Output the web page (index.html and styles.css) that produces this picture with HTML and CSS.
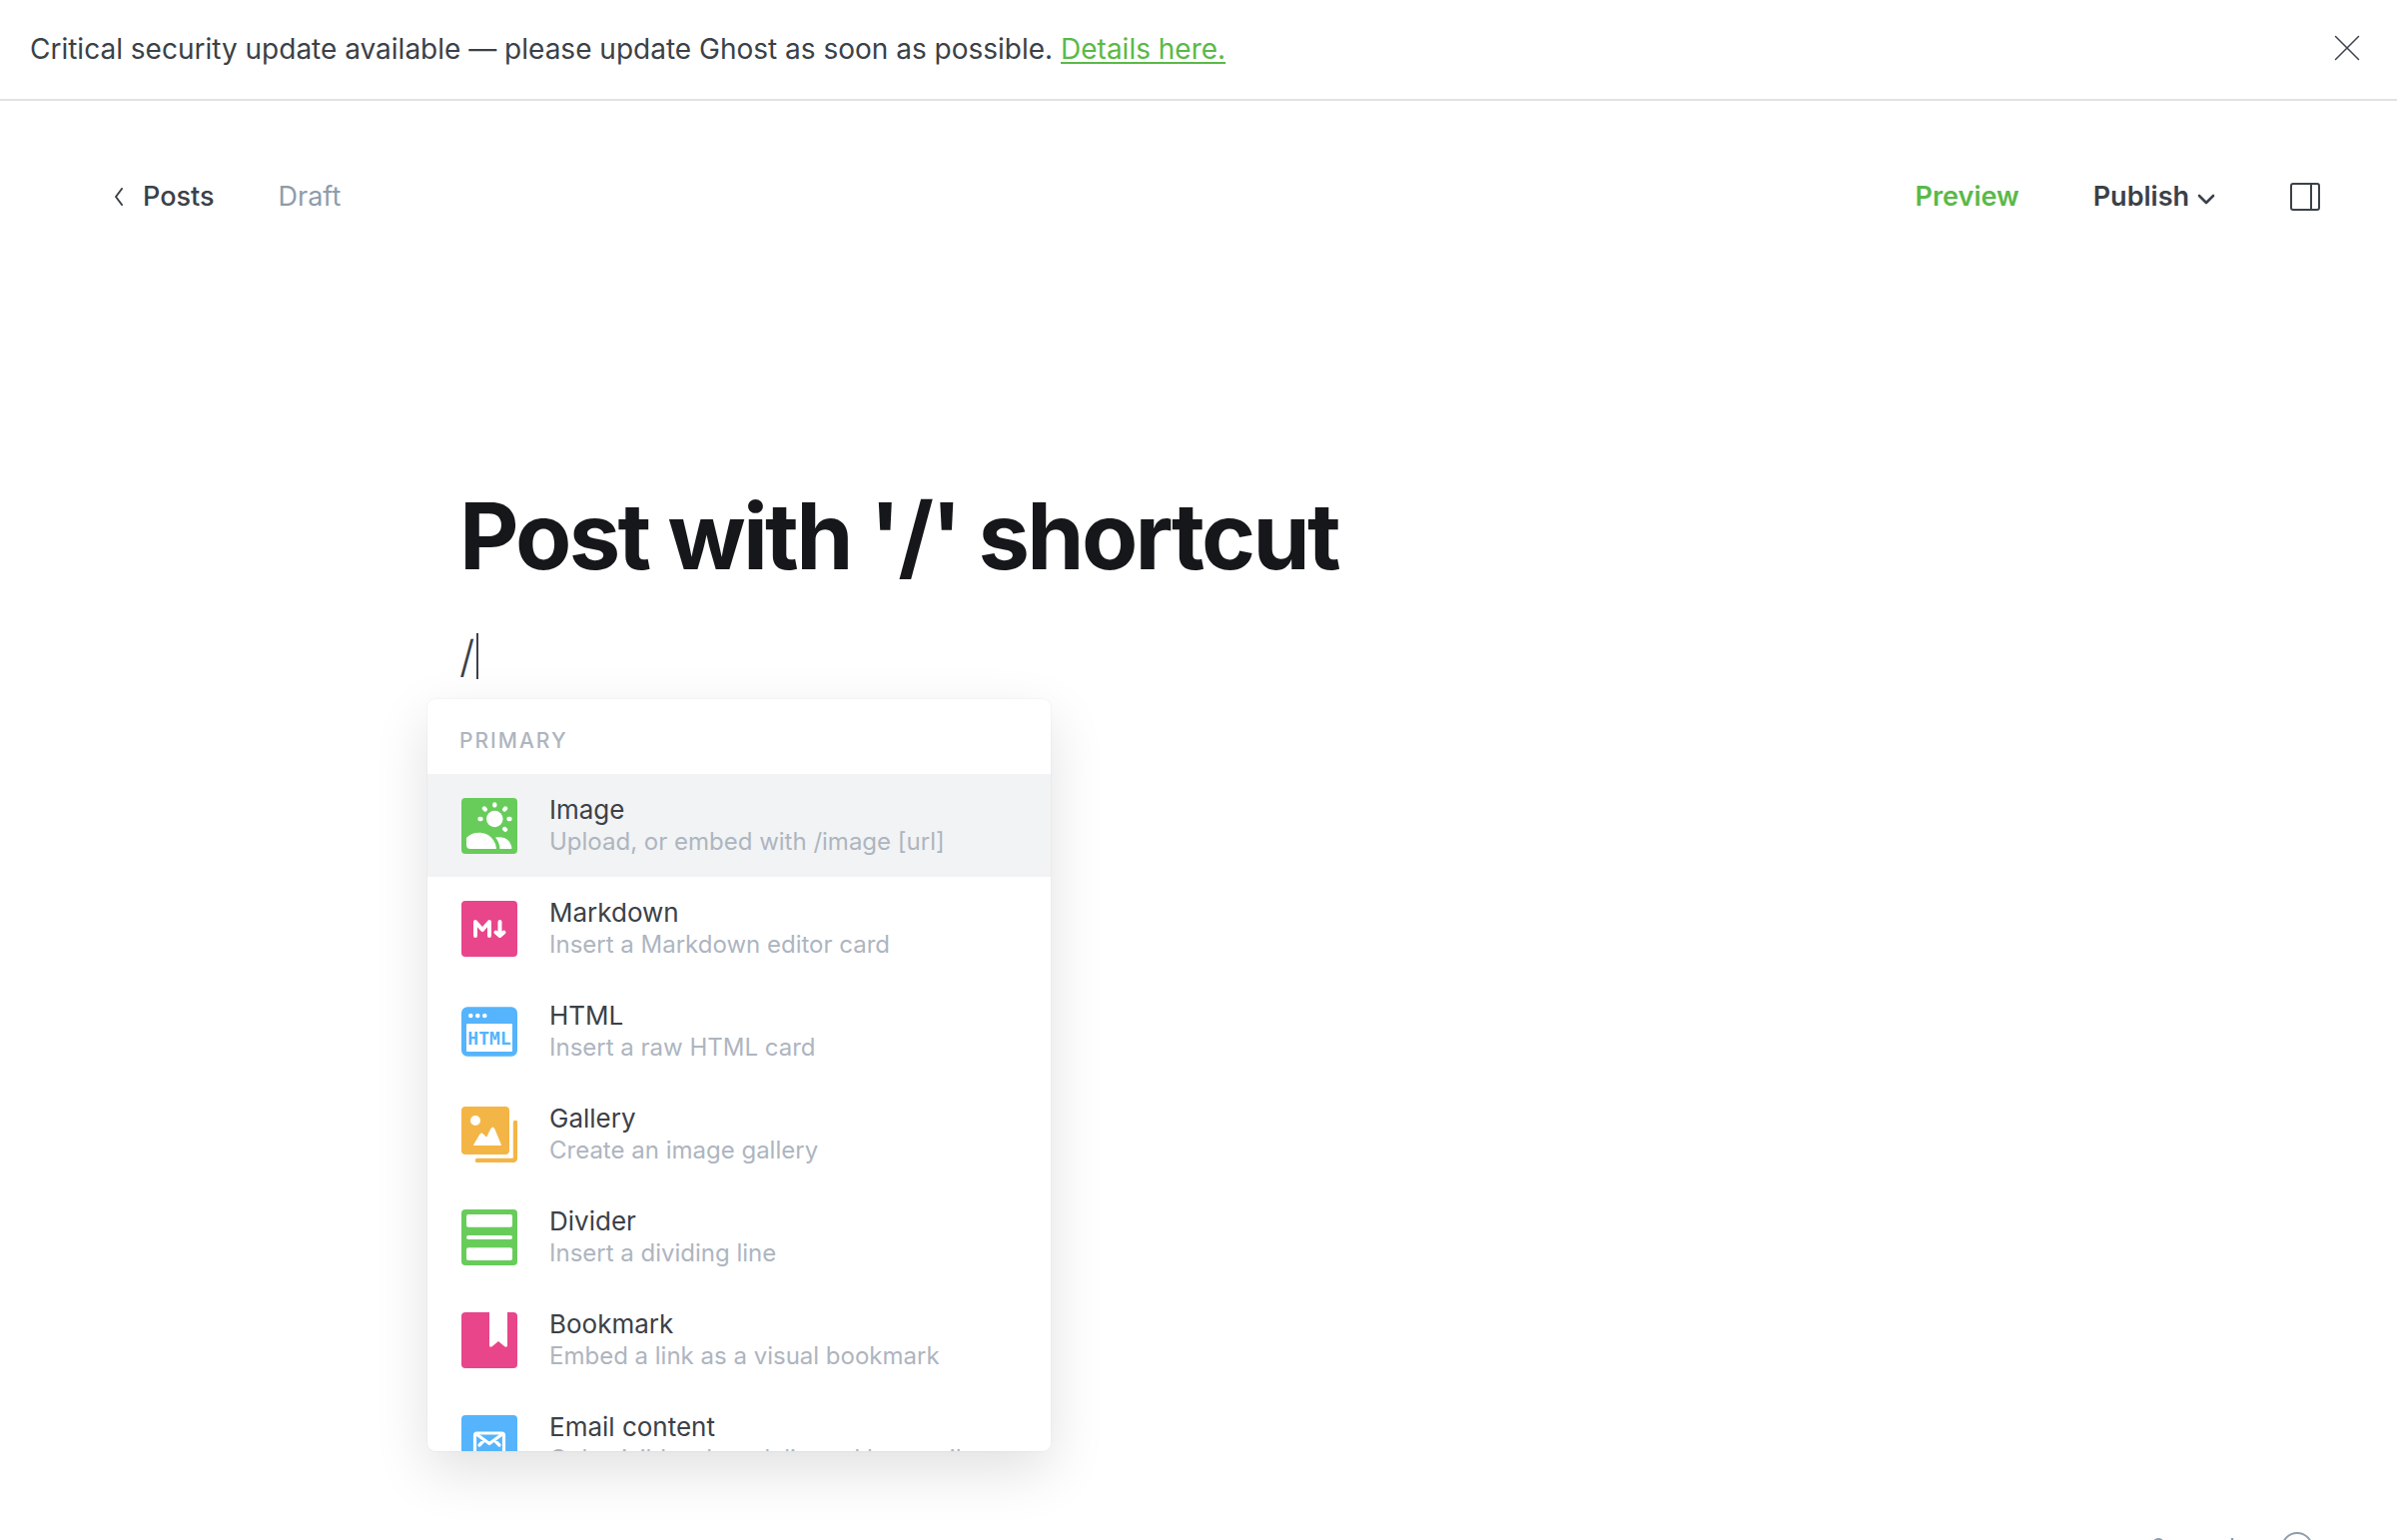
FILE: index.html
```html
<!DOCTYPE html>
<html lang="en">
<head>
<meta charset="utf-8">
<meta name="viewport" content="width=device-width, initial-scale=1">
<title>Editor - Ghost</title>
<link rel="stylesheet" href="styles.css">
</head>
<body>
<aside class="alert">
  <p class="alert-text">Critical security update available — please update Ghost as soon as possible. <a class="alert-link" href="#details">Details here.</a></p>
  <button class="icon-button" type="button" aria-label="Close">
    <svg width="26" height="26" viewBox="0 0 26 26" fill="none" stroke="currentColor" stroke-width="1.500" stroke-linecap="round"><path d="M1.500 1.500l23 23M24.500 1.500l-23 23"/></svg>
  </button>
</aside>

<header class="toolbar">
  <nav class="toolbar-group">
    <a class="back-link" href="#posts">
      <svg width="12" height="18" viewBox="0 0 12 18" fill="none" stroke="currentColor" stroke-width="2" stroke-linecap="round" stroke-linejoin="round"><path d="M9 1L3 9l6 8"/></svg>
      Posts
    </a>
    <span class="post-status">Draft</span>
  </nav>
  <div class="toolbar-group toolbar-actions">
    <button class="action action-preview" type="button">Preview</button>
    <button class="action" type="button">Publish
      <svg class="action-caret" width="18" height="12" viewBox="0 0 18 12" fill="none" stroke="currentColor" stroke-width="2.600" stroke-linecap="round" stroke-linejoin="round"><path d="M2 2l7 7 7-7"/></svg>
    </button>
    <button class="icon-button" type="button" aria-label="Post settings">
      <svg width="32" height="30" viewBox="0 0 32 30" fill="none" stroke="currentColor" stroke-width="2"><rect x="2" y="2" width="28" height="26" rx="2"/><path d="M22 2v26"/></svg>
    </button>
  </div>
</header>

<main class="editor">
  <input class="post-title" type="text" aria-label="Post title" value="Post with '/' shortcut">
  <div class="post-body">
    <p class="paragraph">/<span class="text-cursor"></span></p>
    <section class="card-menu" aria-label="Cards">
      <h2 class="menu-heading">Primary</h2>
      <button class="menu-item menu-item-selected" type="button">
        <svg class="menu-icon" viewBox="0 0 56 56"><rect width="56" height="56" rx="4" fill="#68cc5b"/><g fill="#fff"><circle cx="33.3" cy="21" r="8.3"/><path d="M5 40C11 33 25 33 31 41q3.5 4 4 10H9q-4 0-4-4zM34 39.500C42 38 49 41 50.500 50q0 1-1 1H38.500Q38 44 34 39.500z"/></g><g stroke="#fff" stroke-width="4.400" stroke-linecap="round"><path d="M33.300 6.400v1M23 10.500l.8 1M44 10.500l-.8 1M18.500 21h1M47.500 21h1M43.200 31l.8.8"/></g></svg>
        <span class="menu-label"><span class="menu-title">Image</span><span class="menu-desc">Upload, or embed with /image [url]</span></span>
      </button>
      <button class="menu-item" type="button">
        <svg class="menu-icon" viewBox="0 0 56 56"><rect width="56" height="56" rx="4" fill="#e8458b"/><g fill="none" stroke="#fff" stroke-width="4" stroke-linecap="round" stroke-linejoin="round"><path d="M14 35V21l7 8 7-8v14"/><path d="M38.500 21v12M34.500 31.500l4 3.500 4-3.500"/></g></svg>
        <span class="menu-label"><span class="menu-title">Markdown</span><span class="menu-desc">Insert a Markdown editor card</span></span>
      </button>
      <button class="menu-item" type="button">
        <svg class="menu-icon" viewBox="0 0 56 56"><rect y="3.300" width="56" height="49.400" rx="6" fill="#55b4fb"/><g fill="#fff"><circle cx="9.300" cy="12" r="2.300"/><circle cx="16.300" cy="12" r="2.300"/><circle cx="23.300" cy="12" r="2.300"/><rect x="5" y="20" width="46" height="28" rx="1"/></g><text class="icon-text" x="28" y="41" text-anchor="middle">HTML</text></svg>
        <span class="menu-label"><span class="menu-title">HTML</span><span class="menu-desc">Insert a raw HTML card</span></span>
      </button>
      <button class="menu-item" type="button">
        <svg class="menu-icon" viewBox="0 0 56 56"><rect width="48" height="48" rx="4" fill="#f4b547"/><path d="M54 16v35q0 3-3 3H16" fill="none" stroke="#f4b547" stroke-width="4.400" stroke-linecap="round"/><circle cx="14" cy="14" r="5" fill="#fff"/><path d="M12.500 38.500L19 27.500q1.200-1.200 2.400 0l4 3.800L30 21.800q1.300-1.600 2.600 0l6.900 16.700z" fill="#fff" stroke="#fff" stroke-linejoin="round"/></svg>
        <span class="menu-label"><span class="menu-title">Gallery</span><span class="menu-desc">Create an image gallery</span></span>
      </button>
      <button class="menu-item" type="button">
        <svg class="menu-icon" viewBox="0 0 56 56"><rect width="56" height="56" rx="4" fill="#68cc5b"/><g fill="#fff"><rect x="5" y="5" width="46" height="12.700" rx="2"/><rect x="5" y="26" width="46" height="4" rx="2"/><rect x="5" y="38.300" width="46" height="12.700" rx="2"/></g></svg>
        <span class="menu-label"><span class="menu-title">Divider</span><span class="menu-desc">Insert a dividing line</span></span>
      </button>
      <button class="menu-item" type="button">
        <svg class="menu-icon" viewBox="0 0 56 56"><rect width="56" height="56" rx="4" fill="#e8458b"/><path d="M28 0h18v34q-1.500 1.500-3 0l-6-5-6 5q-1.500 1.500-3 0z" fill="#fff"/></svg>
        <span class="menu-label"><span class="menu-title">Bookmark</span><span class="menu-desc">Embed a link as a visual bookmark</span></span>
      </button>
      <button class="menu-item" type="button">
        <svg class="menu-icon" viewBox="0 0 56 56"><rect width="56" height="56" rx="4" fill="#55b4fb"/><g fill="none" stroke="#fff" stroke-width="3.200" stroke-linecap="round" stroke-linejoin="round"><rect x="13.500" y="18" width="29" height="22" rx="2"/><path d="M15 19l13 9.500L41 19M18 30l4-4M38 30l-4-4"/></g></svg>
        <span class="menu-label"><span class="menu-title">Email content</span><span class="menu-desc">Only visible when delivered by email</span></span>
      </button>
    </section>
  </div>
</main>

<footer class="word-count">
  <span>0 words</span>
  <a class="help-link" href="#help" aria-label="Help">?</a>
</footer>
</body>
</html>
```
FILE: styles.css
```css
* {
  box-sizing: border-box;
}

body {
  margin: 0;
  min-height: 100vh;
  overflow: hidden;
  background: #fff;
  color: #3b4148;
  font-family: Inter, "Liberation Sans", sans-serif;
  font-size: 26px;
  line-height: 32px;
}

button {
  padding: 0;
  border: 0;
  background: none;
  color: inherit;
  font: inherit;
  text-align: left;
  cursor: pointer;
}

svg {
  display: block;
}

.alert {
  display: flex;
  align-items: center;
  justify-content: space-between;
  height: 101px;
  padding: 0 37px 3px 30px;
  border-bottom: 2px solid #e1e3e2;
}

.alert-text {
  margin: 0;
  padding-top: 2px;
  font-size: 28px;
}

.alert-link {
  color: #5ab948;
  text-underline-offset: 3px;
  text-decoration-thickness: 2px;
}

.icon-button {
  flex: none;
}

.toolbar {
  display: flex;
  align-items: center;
  justify-content: space-between;
  height: 192px;
  padding: 0 76px 0 113px;
  font-size: 27px;
}

.toolbar-group {
  display: flex;
  align-items: center;
  gap: 64px;
}

.toolbar-actions {
  gap: 74px;
}

.back-link {
  display: flex;
  align-items: center;
  gap: 18px;
  color: inherit;
  font-weight: 500;
  text-decoration: none;
}

.post-status {
  color: #8e9cac;
}

.action {
  display: flex;
  align-items: center;
  gap: 8px;
  font-weight: 600;
}

.action-preview {
  color: #5ab948;
}

.action-caret {
  margin-top: 6px;
}

.editor {
  max-width: 1480px;
  margin: 0 auto;
  padding-top: 180px;
}

.post-title {
  display: block;
  width: 100%;
  padding: 0;
  border: 0;
  outline: 0;
  background: none;
  color: #15171a;
  font: inherit;
  font-size: 92px;
  font-weight: 700;
  line-height: 128px;
  letter-spacing: -0.03em;
}

.post-body {
  position: relative;
  padding-top: 24px;
}

.paragraph {
  display: flex;
  align-items: center;
  gap: 2px;
  margin: 0;
  font-size: 44px;
  font-weight: 300;
  line-height: 64px;
}

.text-cursor {
  width: 2px;
  height: 46px;
  background: #3b4148;
}

.card-menu {
  position: absolute;
  top: 99px;
  left: -32px;
  width: 624px;
  height: 753px;
  overflow: hidden;
  border-radius: 8px;
  background: #fff;
  box-shadow: 0 0 2px rgba(0, 0, 0, 0.08), 0 20px 56px rgba(0, 0, 0, 0.12);
}

.menu-heading {
  margin: 0;
  padding: 26px 32px 17px;
  color: #aeb5bf;
  font-size: 21px;
  font-weight: 500;
  line-height: 32px;
  letter-spacing: 2px;
  text-transform: uppercase;
}

.menu-item {
  display: flex;
  align-items: center;
  gap: 32px;
  width: 100%;
  height: 103px;
  padding: 0 34px;
}

.menu-item-selected {
  background: #f1f3f4;
}

.menu-icon {
  flex: none;
  width: 56px;
  height: 56px;
}

.menu-label {
  display: flex;
  flex-direction: column;
  padding-top: 1px;
  white-space: nowrap;
}

.menu-desc {
  color: #aeb5bf;
  font-size: 24px;
}

.icon-text {
  fill: #55b4fb;
  font: bold 18px "DejaVu Sans Mono", monospace;
}

.word-count {
  position: fixed;
  right: 84px;
  bottom: -26px;
  display: flex;
  align-items: center;
  gap: 32px;
  height: 36px;
  color: #8e9cac;
}

.help-link {
  width: 32px;
  height: 32px;
  border: 2px solid;
  border-radius: 50%;
  color: inherit;
  font-size: 22px;
  line-height: 28px;
  text-align: center;
  text-decoration: none;
}
```
